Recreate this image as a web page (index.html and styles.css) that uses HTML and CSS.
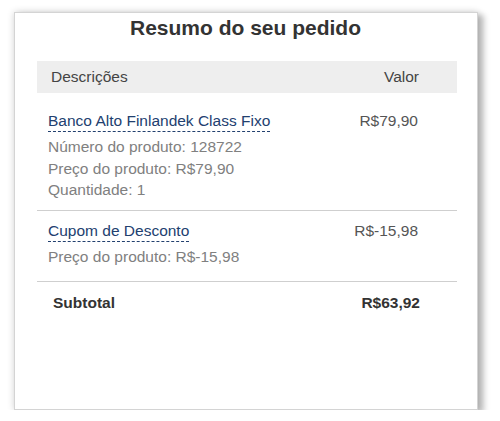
FILE: index.html
```html
<!DOCTYPE html>
<html lang="pt-BR">
<head>
<meta charset="utf-8">
<title>Resumo do seu pedido</title>
<link rel="stylesheet" href="styles.css">
</head>
<body>
<div class="card">
  <h1 class="title">Resumo do seu pedido</h1>
  <div class="head">
    <span>Descrições</span>
    <span>Valor</span>
  </div>
  <div class="row row-first">
    <div class="desc">
      <a class="link" href="#">Banco Alto Finlandek Class Fixo</a>
      <div class="detail">Número do produto: 128722</div>
      <div class="detail">Preço do produto: R$79,90</div>
      <div class="detail">Quantidade: 1</div>
    </div>
    <div class="value">R$79,90</div>
  </div>
  <div class="row row-second">
    <div class="desc">
      <a class="link" href="#">Cupom de Desconto</a>
      <div class="detail">Preço do produto: R$-15,98</div>
    </div>
    <div class="value">R$-15,98</div>
  </div>
  <div class="total">
    <span>Subtotal</span>
    <span>R$63,92</span>
  </div>
</div>
</body>
</html>
```

FILE: styles.css
```css
html, body {
  margin: 0;
  padding: 0;
  background: #fff;
}
body {
  font-family: "Liberation Sans", Arial, sans-serif;
  font-size: 15.5px;
  padding: 12px 0 0 14px;
}
.card {
  box-sizing: border-box;
  width: 464px;
  height: 398px;
  border: 1px solid #d4d4d4;
  background: #fff;
  box-shadow: 0 0 7px rgba(0, 0, 0, 0.18), 6px 3px 6px rgba(0, 0, 0, 0.24);
  padding: 0 20px 0 22px;
}
.title {
  margin: 3px 0 0;
  font-size: 21px;
  line-height: 24px;
  font-weight: bold;
  color: #333;
  text-align: center;
  padding-right: 3px;
}
.head {
  margin-top: 21px;
  height: 32px;
  line-height: 32px;
  background: #eeeeee;
  color: #444;
  display: flex;
  justify-content: space-between;
  padding: 0 38px 0 14px;
}
.row {
  display: flex;
  justify-content: space-between;
  align-items: flex-start;
  padding: 0 39px 0 11px;
  border-bottom: 1px solid #cfcfcf;
}
.row-first {
  padding-top: 18px;
  padding-bottom: 9px;
}
.row-second {
  padding-top: 10px;
  padding-bottom: 14px;
}
.desc {
  display: flex;
  flex-direction: column;
  align-items: flex-start;
}
.link {
  color: #22406f;
  text-decoration: none;
  line-height: 20px;
  border-bottom: 1px dashed #22406f;
  margin-bottom: 4px;
}
.detail {
  color: #808080;
  line-height: 21.5px;
}
.value {
  color: #555;
  line-height: 20px;
}
.total {
  display: flex;
  justify-content: space-between;
  padding: 10px 37px 0 16px;
  line-height: 22px;
  font-weight: bold;
  color: #333;
}
```
